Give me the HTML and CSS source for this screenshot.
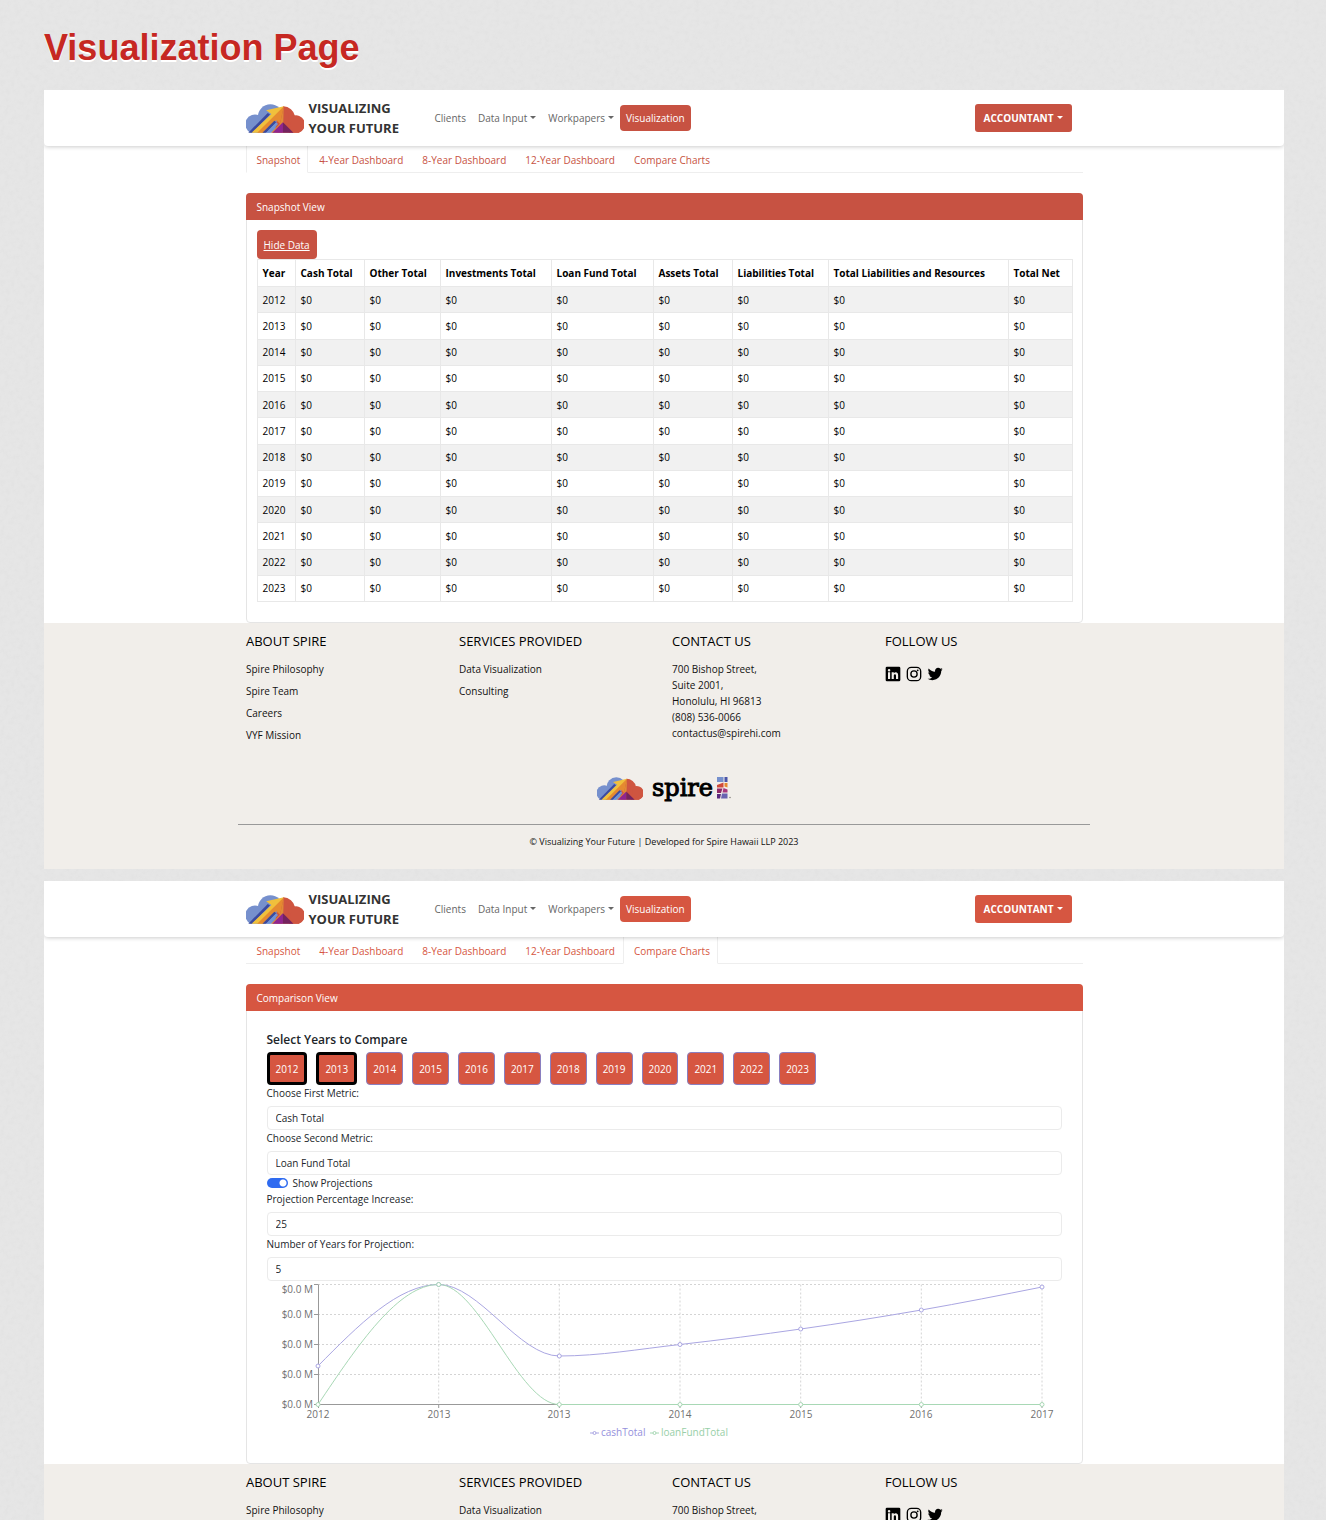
FILE: index.html
```html
<!DOCTYPE html>
<html lang="en">
<head>
<meta charset="utf-8">
<title>Visualization Page</title>
<link rel="stylesheet" href="styles.css">
</head>
<body>
<svg class="defs" width="0" height="0" aria-hidden="true">
  <symbol id="cloud" viewBox="0 0 176 88">
    <g fill="#7690cd"><path d="M14 87A29 29 0 1 1 40 35V87Z"/><circle cx="74" cy="39" r="38"/><path d="M30 50H110V87H30Z"/></g>
    <path fill="#cf5540" d="M113 7A37 37 0 0 1 149 37A26 26 0 0 1 160 87H90V60Z"/>
    <path fill="#cf5540" d="M140 37A27 27 0 1 1 160 87H130Z"/>
    <path fill="#3b4a9f" d="M7 87L66 27L73 32L19 87Z"/>
    <path fill="#f0c03c" d="M17 87L77 30L61 19L115 7L90 44L50 87Z"/>
    <path fill="#e58a30" d="M34 87L115 7L103 60L92 49L56 87Z"/>
    <path fill="#3b4a9f" d="M50 87L86 51L92 55L61 87Z"/>
    <path fill="#6f94d6" d="M61 87L92 55L97 61L74 87Z"/>
    <path fill="#e08a36" d="M115 7L103 60L76 87H92L113 58Z"/>
    <path fill="#cf5540" d="M115 7V60L128 70V30Z"/>
    <path fill="#8f2590" d="M80 87L112 55V87Z"/>
    <path fill="#74235f" d="M112 55L144 87H112Z"/>
  </symbol>
  <symbol id="linkedin" viewBox="0 0 24 24">
    <path fill-rule="evenodd" d="M3 1H21A2 2 0 0 1 23 3V21A2 2 0 0 1 21 23H3A2 2 0 0 1 1 21V3A2 2 0 0 1 3 1ZM4.500 9.500V19.500H7.700V9.500ZM6.100 4.500A1.900 1.900 0 1 0 6.100 8.300A1.900 1.900 0 1 0 6.100 4.500ZM10 9.500V19.500H13.200V14.500C13.200 11.500 16.500 11.500 16.500 14.500V19.500H19.700V13.500C19.700 8.500 15 8.200 13.200 10.900V9.500Z"/>
  </symbol>
  <symbol id="instagram" viewBox="0 0 24 24">
    <rect x="2" y="2" width="20" height="20" rx="6" fill="none" stroke="#000" stroke-width="2"/>
    <circle cx="12" cy="12" r="4.700" fill="none" stroke="#000" stroke-width="2"/>
    <circle cx="17.500" cy="6.500" r="1.400"/>
  </symbol>
  <symbol id="twitter" viewBox="0 0 24 24">
    <path d="M23.643 4.937c-.835.37-1.732.62-2.675.733.962-.576 1.7-1.49 2.048-2.578-.9.534-1.897.922-2.958 1.13-.85-.904-2.06-1.47-3.4-1.47-2.572 0-4.658 2.086-4.658 4.66 0 .364.042.718.12 1.06-3.873-.195-7.304-2.05-9.602-4.868-.4.69-.63 1.49-.63 2.342 0 1.616.823 3.043 2.072 3.878-.764-.025-1.482-.234-2.11-.583v.06c0 2.257 1.605 4.14 3.737 4.568-.392.106-.803.162-1.227.162-.3 0-.593-.028-.877-.082.593 1.85 2.313 3.198 4.352 3.234-1.595 1.25-3.604 1.995-5.786 1.995-.376 0-.747-.022-1.112-.065 2.062 1.323 4.51 2.093 7.14 2.093 8.57 0 13.255-7.098 13.255-13.254 0-.2-.005-.402-.014-.602.91-.658 1.7-1.477 2.323-2.41z"/>
  </symbol>
</svg>

<h1 class="title">Visualization Page</h1>

<section class="frame">
  <header class="navbar">
    <div class="container navbar-inner">
      <a class="brand" href="#"><svg class="brand-logo"><use href="#cloud"/></svg><span>VISUALIZING<br>YOUR FUTURE</span></a>
      <nav class="nav">
        <a href="#">Clients</a>
        <a class="caret" href="#">Data Input</a>
        <a class="caret" href="#">Workpapers</a>
        <a class="active" href="#">Visualization</a>
      </nav>
      <button class="account caret" type="button">ACCOUNTANT</button>
    </div>
  </header>
  <main class="container">
    <nav class="tabs">
      <a class="current" href="#">Snapshot</a>
      <a href="#">4-Year Dashboard</a>
      <a href="#">8-Year Dashboard</a>
      <a href="#">12-Year Dashboard</a>
      <a href="#">Compare Charts</a>
    </nav>
    <section class="card">
      <h2 class="card-header">Snapshot View</h2>
      <div class="card-body">
        <button class="hide-data" type="button">Hide Data</button>
        <table class="data">
          <colgroup><col class="c-year"><col class="c-cash"><col class="c-other"><col class="c-invest"><col class="c-loan"><col class="c-assets"><col class="c-liab"><col class="c-resources"><col class="c-net"></colgroup>
          <thead><tr><th>Year</th><th>Cash Total</th><th>Other Total</th><th>Investments Total</th><th>Loan Fund Total</th><th>Assets Total</th><th>Liabilities Total</th><th>Total Liabilities and Resources</th><th>Total Net</th></tr></thead>
          <tbody>
            <tr><td>2012</td><td>$0</td><td>$0</td><td>$0</td><td>$0</td><td>$0</td><td>$0</td><td>$0</td><td>$0</td></tr>
            <tr><td>2013</td><td>$0</td><td>$0</td><td>$0</td><td>$0</td><td>$0</td><td>$0</td><td>$0</td><td>$0</td></tr>
            <tr><td>2014</td><td>$0</td><td>$0</td><td>$0</td><td>$0</td><td>$0</td><td>$0</td><td>$0</td><td>$0</td></tr>
            <tr><td>2015</td><td>$0</td><td>$0</td><td>$0</td><td>$0</td><td>$0</td><td>$0</td><td>$0</td><td>$0</td></tr>
            <tr><td>2016</td><td>$0</td><td>$0</td><td>$0</td><td>$0</td><td>$0</td><td>$0</td><td>$0</td><td>$0</td></tr>
            <tr><td>2017</td><td>$0</td><td>$0</td><td>$0</td><td>$0</td><td>$0</td><td>$0</td><td>$0</td><td>$0</td></tr>
            <tr><td>2018</td><td>$0</td><td>$0</td><td>$0</td><td>$0</td><td>$0</td><td>$0</td><td>$0</td><td>$0</td></tr>
            <tr><td>2019</td><td>$0</td><td>$0</td><td>$0</td><td>$0</td><td>$0</td><td>$0</td><td>$0</td><td>$0</td></tr>
            <tr><td>2020</td><td>$0</td><td>$0</td><td>$0</td><td>$0</td><td>$0</td><td>$0</td><td>$0</td><td>$0</td></tr>
            <tr><td>2021</td><td>$0</td><td>$0</td><td>$0</td><td>$0</td><td>$0</td><td>$0</td><td>$0</td><td>$0</td></tr>
            <tr><td>2022</td><td>$0</td><td>$0</td><td>$0</td><td>$0</td><td>$0</td><td>$0</td><td>$0</td><td>$0</td></tr>
            <tr><td>2023</td><td>$0</td><td>$0</td><td>$0</td><td>$0</td><td>$0</td><td>$0</td><td>$0</td><td>$0</td></tr>
          </tbody>
        </table>
      </div>
    </section>
  </main>
  <footer class="footer">
    <div class="footer-inner">
      <div class="footer-cols">
        <section><h3>ABOUT SPIRE</h3><ul><li><a href="#">Spire Philosophy</a></li><li><a href="#">Spire Team</a></li><li><a href="#">Careers</a></li><li><a href="#">VYF Mission</a></li></ul></section>
        <section><h3>SERVICES PROVIDED</h3><ul><li><a href="#">Data Visualization</a></li><li><a href="#">Consulting</a></li></ul></section>
        <section><h3>CONTACT US</h3><address>700 Bishop Street,<br>Suite 2001,<br>Honolulu, HI 96813<br>(808) 536-0066<br>contactus@spirehi.com</address></section>
        <section><h3>FOLLOW US</h3><div class="social"><a href="#" aria-label="LinkedIn"><svg><use href="#linkedin"/></svg></a><a href="#" aria-label="Instagram"><svg><use href="#instagram"/></svg></a><a href="#" aria-label="Twitter"><svg><use href="#twitter"/></svg></a></div></section>
      </div>
      <div class="logos">
        <svg class="footer-cloud"><use href="#cloud"/></svg>
        <span class="spire">spire</span>
        <svg class="spire-mark" viewBox="0 0 14 22">
          <path fill="#7690cd" d="M0 0H6.500V5H0Z"/><path fill="#4b55a8" d="M7.500 0H10.500V5H7.500Z"/>
          <path fill="#cf4a3a" d="M0 8L6.500 5.500V10.500H0Z"/><path fill="#e58a30" d="M7.500 6H10.500V10.500L7.500 9.500Z"/>
          <path fill="#8f2a6a" d="M0 11.500H5.500L4 16H0Z"/><path fill="#a8357c" d="M6.500 11L10.500 12.500V15.500H5.500Z"/>
          <path fill="#5a2a80" d="M0 17H4L3 21.500H0Z"/><path fill="#6a62b0" d="M5 16.500H10.500V21.500H4Z"/>
          <circle cx="13" cy="20.500" r=".8" fill="#8a8580"/>
        </svg>
      </div>
      <p class="copyright">© Visualizing Your Future | Developed for Spire Hawaii LLP 2023</p>
    </div>
  </footer>
</section>

<section class="frame frame-compare">
  <header class="navbar">
    <div class="container navbar-inner">
      <a class="brand" href="#"><svg class="brand-logo"><use href="#cloud"/></svg><span>VISUALIZING<br>YOUR FUTURE</span></a>
      <nav class="nav">
        <a href="#">Clients</a>
        <a class="caret" href="#">Data Input</a>
        <a class="caret" href="#">Workpapers</a>
        <a class="active" href="#">Visualization</a>
      </nav>
      <button class="account caret" type="button">ACCOUNTANT</button>
    </div>
  </header>
  <main class="container">
    <nav class="tabs">
      <a href="#">Snapshot</a>
      <a href="#">4-Year Dashboard</a>
      <a href="#">8-Year Dashboard</a>
      <a href="#">12-Year Dashboard</a>
      <a class="current" href="#">Compare Charts</a>
    </nav>
    <section class="card">
      <h2 class="card-header">Comparison View</h2>
      <form class="compare">
        <h3>Select Years to Compare</h3>
        <div class="years">
          <button class="selected" type="button">2012</button>
          <button class="selected" type="button">2013</button>
          <button type="button">2014</button>
          <button type="button">2015</button>
          <button type="button">2016</button>
          <button type="button">2017</button>
          <button type="button">2018</button>
          <button type="button">2019</button>
          <button type="button">2020</button>
          <button type="button">2021</button>
          <button type="button">2022</button>
          <button type="button">2023</button>
        </div>
        <label for="metric1">Choose First Metric:</label>
        <select id="metric1"><option>Cash Total</option></select>
        <label for="metric2">Choose Second Metric:</label>
        <select id="metric2"><option>Loan Fund Total</option></select>
        <div class="switch"><input id="projections" type="checkbox" checked><label for="projections">Show Projections</label></div>
        <label for="increase">Projection Percentage Increase:</label>
        <input id="increase" class="field" type="text" value="25">
        <label for="span">Number of Years for Projection:</label>
        <input id="span" class="field" type="text" value="5">
        <svg class="chart" viewBox="0 0 795 162" role="img" aria-label="Cash total and loan fund total by year">
          <path class="grid" d="M51 3.500H775M51 33.500H775M51 63.500H775M51 93.500H775M171.700 3.500V123.500M292.300 3.500V123.500M413 3.500V123.500M533.700 3.500V123.500M654.300 3.500V123.500M775 3.500V123.500"/>
          <path class="axis" d="M51.500 3.500V123.500H775M47 3.500H51M47 33.500H51M47 63.500H51M47 93.500H51M47 123.500H51M51.500 123V127M171.700 123V127M292.300 123V127M413 123V127M533.700 123V127M654.300 123V127M775 123V127"/>
          <path class="cash" d="M51 85C91.200 44.300 131.500 3.500 171.700 3.500C211.900 3.500 252.100 75 292.300 75C332.500 75 372.800 68 413 63.500C453.200 59 493.500 53.700 533.700 48C573.900 42.300 614.100 36 654.300 29C694.500 22 734.800 14 775 6"/>
          <path class="loan" d="M51 123.500C91.200 63.500 131.500 3.500 171.700 3.500C211.900 3.500 252.100 123.500 292.300 123.500H775"/>
          <g class="cash"><circle cx="51" cy="85" r="2"/><circle cx="171.700" cy="3.500" r="2"/><circle cx="292.300" cy="75" r="2"/><circle cx="413" cy="63.500" r="2"/><circle cx="533.700" cy="48" r="2"/><circle cx="654.300" cy="29" r="2"/><circle cx="775" cy="6" r="2"/></g>
          <g class="loan"><circle cx="51" cy="123.500" r="2"/><circle cx="171.700" cy="3.500" r="2"/><circle cx="292.300" cy="123.500" r="2"/><circle cx="413" cy="123.500" r="2"/><circle cx="533.700" cy="123.500" r="2"/><circle cx="654.300" cy="123.500" r="2"/><circle cx="775" cy="123.500" r="2"/></g>
          <g class="y-labels"><text x="46" y="12">$0.0 M</text><text x="46" y="37">$0.0 M</text><text x="46" y="67">$0.0 M</text><text x="46" y="97">$0.0 M</text><text x="46" y="127">$0.0 M</text></g>
          <g class="x-labels"><text x="51" y="137">2012</text><text x="172" y="137">2013</text><text x="292" y="137">2013</text><text x="413" y="137">2014</text><text x="534" y="137">2015</text><text x="654" y="137">2016</text><text x="775" y="137">2017</text></g>
          <g class="cash"><path d="M323 152H332"/><circle cx="327.500" cy="152" r="1.500"/><text x="334" y="155">cashTotal</text></g>
          <g class="loan"><path d="M383 152H392"/><circle cx="387.500" cy="152" r="1.500"/><text x="394" y="155">loanFundTotal</text></g>
        </svg>
      </form>
    </section>
  </main>
  <footer class="footer">
    <div class="footer-inner">
      <div class="footer-cols">
        <section><h3>ABOUT SPIRE</h3><ul><li><a href="#">Spire Philosophy</a></li></ul></section>
        <section><h3>SERVICES PROVIDED</h3><ul><li><a href="#">Data Visualization</a></li></ul></section>
        <section><h3>CONTACT US</h3><address>700 Bishop Street,</address></section>
        <section><h3>FOLLOW US</h3><div class="social"><a href="#" aria-label="LinkedIn"><svg><use href="#linkedin"/></svg></a><a href="#" aria-label="Instagram"><svg><use href="#instagram"/></svg></a><a href="#" aria-label="Twitter"><svg><use href="#twitter"/></svg></a></div></section>
      </div>
    </div>
  </footer>
</section>
</body>
</html>
```
FILE: styles.css
```css
* { box-sizing: border-box; }

html { overflow: hidden; }

body {
  margin: 0;
  height: 100vh;
  overflow: hidden;
  padding: 0 42px 0 44px;
  color: #212529;
  font: 10px/16px "Open Sans", "Noto Sans", sans-serif;
  background: #e6e6e6 url("data:image/svg+xml,%3Csvg xmlns='http://www.w3.org/2000/svg' width='200' height='200'%3E%3Cfilter id='n'%3E%3CfeTurbulence type='fractalNoise' baseFrequency='.2' numOctaves='3' stitchTiles='stitch'/%3E%3CfeColorMatrix values='0 0 0 0 .5 0 0 0 0 .5 0 0 0 0 .5 .16 0 0 0 -.06'/%3E%3C/filter%3E%3Crect width='200' height='200' filter='url(%23n)'/%3E%3C/svg%3E");
}

h1, h2, h3, p, ul { margin: 0; padding: 0; font-weight: 400; }
ul { list-style: none; }
a { color: inherit; text-decoration: none; }
button, input, select { font: inherit; color: inherit; }
svg { display: block; }
.defs { position: absolute; }

.title {
  padding: 26px 0 20px;
  color: #c62822;
  font: 700 36px/44px "Liberation Sans", Arial, sans-serif;
  text-shadow: 0 2px 0 #fff;
}

.frame { --accent: #c75242; background: #fff; margin-bottom: 12px; overflow: hidden; }
.frame-compare { --accent: #d65641; }

.container { max-width: 837px; margin: 0 auto; }

/* Navigation */
.navbar {
  position: relative;
  background: #fff;
  border-radius: 0 0 4px 4px;
  box-shadow: 0 1px 4px rgba(0, 0, 0, .2);
}
.navbar-inner { display: flex; align-items: center; height: 56px; padding-right: 11px; }
.brand { display: flex; align-items: center; gap: 5px; width: 183px; color: #333; font-weight: 700; font-size: 13px; line-height: 20px; }
.brand-logo { width: 58px; height: 29px; }
.nav { display: flex; flex: 1; color: #666; }
.nav a { padding: 5px 6px; border-radius: 4px; }
.nav .active { background: var(--accent); color: #fff; }
.caret::after {
  content: "";
  display: inline-block;
  margin-left: 3px;
  vertical-align: 3px;
  border: 3px solid transparent;
  border-top-color: currentColor;
  border-bottom: 0;
}
.account { height: 28px; padding: 0 9px; border: 0; border-radius: 3px; background: var(--accent); color: #fff; font-weight: 700; }

.tabs { display: flex; height: 27px; margin-bottom: 20px; border-bottom: 1px solid #eee; color: var(--accent); }
.tabs a { padding: 6px 7px 4px 10px; border: 1px solid transparent; border-top: 0; height: 27px; }
.tabs .current { border-color: #eee; border-bottom-color: #fff; background: #fff; }

/* Cards */
.card { border: 1px solid #e5e5e5; border-radius: 4px; }
.card-header { margin: -1px; padding: 6px 11px 4px; border-radius: 4px 4px 0 0; background: var(--accent); color: #fff; font-size: 10px; line-height: 17px; }
.card-body { padding: 11px 10px 20px; }

.hide-data { display: block; height: 29px; padding: 0 7px; border: 0; border-radius: 4px; background: var(--accent); color: #fff; text-decoration: underline; }

.data { width: 100%; height: 343px; table-layout: fixed; border-collapse: collapse; color: #000; }
.data th, .data td { padding: 0 5px; border: 1px solid #e8e8e8; text-align: left; white-space: nowrap; }
.data th { height: 27px; }
.data tbody tr:nth-child(odd) { background: #f1f1f1; }
.c-year { width: 38px; }
.c-cash { width: 69px; }
.c-other { width: 76px; }
.c-invest { width: 111px; }
.c-loan { width: 102px; }
.c-assets { width: 79px; }
.c-liab { width: 96px; }
.c-resources { width: 180px; }
.c-net { width: 64px; }

/* Comparison form */
.compare { display: flex; flex-direction: column; padding: 21px 20px 20px; }
.compare h3 { margin-bottom: 3px; font-size: 12px; line-height: 18px; font-weight: 600; }
.years { display: flex; flex-wrap: wrap; gap: 9px; }
.years button { height: 33px; padding: 0 6px; border: 1px solid #8a7fc0; border-radius: 4px; background: var(--accent); color: #fff; }
.years .selected { border: 3px solid #000; }
.compare > label { margin-bottom: 4px; line-height: 17px; }
.compare select, .field {
  width: 100%;
  height: 24px;
  padding: 0 8px;
  border: 1px solid #ebebeb;
  border-radius: 4px;
  background: #fff;
  appearance: none;
}
.switch { display: flex; align-items: center; gap: 5px; height: 16px; }
.switch input { width: 21px; height: 10px; margin: 0; border-radius: 5px; appearance: none; background: radial-gradient(circle at 16px 5px, #fff 3px, #2f6bf0 4px); }
.chart { width: 100%; }
.chart path { fill: none; stroke-width: 1; }
.chart .grid { stroke: #d4d4d4; stroke-dasharray: 2 2; }
.chart .axis { stroke: #999; }
.chart .cash { stroke: #aaa6e2; }
.chart .loan { stroke: #a8d8b5; }
.chart circle { fill: #fff; }
.chart text { stroke: none; fill: #707070; font-size: 10px; }
.chart .cash text { fill: #9490dc; }
.chart .loan text { fill: #98cfa8; }
.y-labels { text-anchor: end; }
.x-labels { text-anchor: middle; }

/* Footer */
.footer { background: #f1eeea; color: #111; }
.footer-inner { max-width: 852px; margin: 0 auto; }
.footer-cols { display: grid; grid-template-columns: repeat(4, 1fr); padding-top: 8px; }
.footer-cols section { padding: 0 8px; }
.footer h3 { margin-bottom: 10px; font-size: 13px; line-height: 20px; color: #000; }
.footer li { margin-bottom: 6px; }
.footer address { font-style: normal; }
.social { display: flex; gap: 5px; padding-top: 5px; }
.social svg { width: 16px; height: 16px; }
.logos { display: flex; justify-content: center; align-items: center; height: 48px; margin: 15px 0 12px; }
.footer-cloud { width: 46px; height: 23px; margin-right: 9px; }
.spire { color: #000; font: 24px/30px "DejaVu Serif", serif; -webkit-text-stroke: 1px #000; }
.spire-mark { width: 14px; height: 22px; margin-left: 4px; }
.copyright { padding: 9px 0 19px; border-top: 1px solid #999; font-size: 9px; text-align: center; }
```
